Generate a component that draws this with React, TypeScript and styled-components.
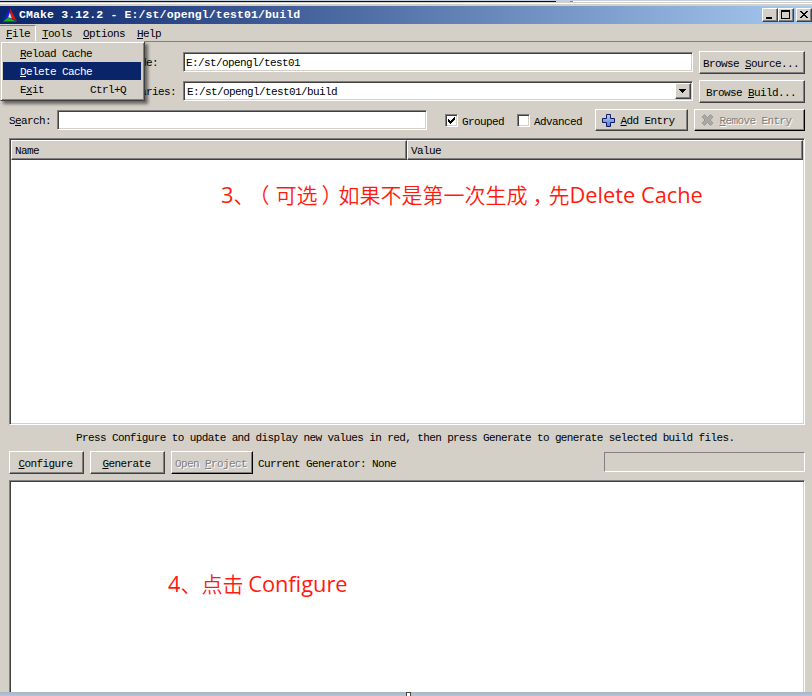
import React from "react";
import styled, { createGlobalStyle, css } from "styled-components";

const face = "#d4d0c8";
const shade = "#808080";
const dark = "#404040";
const navy = "#0a246a";

const GlobalStyle = createGlobalStyle`
  html, body { margin: 0; padding: 0; background: ${face}; overflow: hidden; }
  * { box-sizing: border-box; }
`;

const sunken = css`
  border: 1px solid;
  border-color: ${shade} #fff #fff ${shade};
  box-shadow: inset 1px 1px 0 ${dark}, inset -1px -1px 0 ${face};
`;

const raised = css`
  border: 1px solid;
  border-color: #fff ${dark} ${dark} #fff;
  box-shadow: inset -1px -1px 0 ${shade};
`;

const Window = styled.main`
  position: relative;
  width: 812px;
  height: 696px;
  display: flex;
  flex-direction: column;
  overflow: hidden;
  background: ${face};
  color: #000;
  font: 11px/12px "Liberation Mono", monospace;
  letter-spacing: -0.6px;
  white-space: pre;
`;

const TopEdge = styled.div`
  flex: none;
  height: 6px;
  background: linear-gradient(#c3d0e2 0 1px, transparent 1px 3px, #fff 3px 4px, ${face} 4px),
    linear-gradient(90deg, #111 0 556px, ${face} 556px 570px, #888 570px 573px, #fff 573px) 0 1px / 100% 1px no-repeat,
    ${face};
`;

const TitleBar = styled.header`
  flex: none;
  display: flex;
  align-items: center;
  height: 18px;
  padding: 0 0 0 3px;
  background: linear-gradient(90deg, ${navy}, #a6caf0);
  color: #fff;
`;

const Title = styled.h1`
  flex: 1;
  margin: 0 0 0 2px;
  font: bold 11.5px/12px "Liberation Mono", monospace;
  letter-spacing: 0.13px;
`;

const CaptionButton = styled.button<{ $gap?: number }>`
  ${raised}
  width: 16px;
  height: 14px;
  margin: 0 0 0 ${(p) => p.$gap ?? 0}px;
  padding: 0;
  background: ${face};
  svg { display: block; }
`;

const MenuBar = styled.nav`
  flex: none;
  display: flex;
  height: 18px;
  padding-top: 1px;
  border-bottom: 1px solid ${shade};
`;

const MenuTitle = styled.div<{ $open?: boolean; $width: number }>`
  width: ${(p) => p.$width}px;
  height: 16px;
  padding: 2px 0 0 6px;
  border: 1px solid transparent;
  border-width: 1px 1px 0 0;
  ${(p) => p.$open && css`border-color: ${shade} #fff #fff ${shade};`}
`;

const Popup = styled.div`
  position: absolute;
  left: 0;
  top: 41px;
  width: 145px;
  height: 60px;
  padding: 2px 3px 0 1px;
  background: ${face};
  border: 1px solid;
  border-color: ${face} ${dark} ${dark} ${face};
  box-shadow: inset 1px 1px 0 #fff, inset -1px -1px 0 ${shade}, 3px 3px 3px rgba(0, 0, 0, 0.5);
`;

const MenuItem = styled.div<{ $active?: boolean }>`
  display: flex;
  justify-content: space-between;
  height: 18px;
  margin-left: 1px;
  padding: 4px 15px 0 17px;
  background: ${(p) => (p.$active ? navy : "transparent")};
  color: ${(p) => (p.$active ? "#fff" : "#000")};
`;

const Mnemonic = styled.span`
  text-decoration: underline;
  text-decoration-thickness: 1px;
  text-underline-offset: 1px;
  text-decoration-skip-ink: none;
`;

const Form = styled.section`
  flex: none;
  display: grid;
  grid-template-columns: 174px 510px 106px;
  row-gap: 6px;
  padding: 9px 0 0 9px;
`;

const Label = styled.label`
  margin-left: -1px;
  padding-top: 6px;
`;

const Field = styled.div<{ $inset?: number }>`
  ${sunken}
  display: flex;
  height: 20px;
  margin-top: 1px;
  padding: 4px 1px 0 ${(p) => p.$inset ?? 2}px;
  background: #fff;
`;

const ComboArrow = styled.button`
  ${raised}
  flex: none;
  width: 16px;
  height: 16px;
  margin: -3px 0 0 auto;
  padding: 0;
  background: ${face};
  svg { display: block; }
`;

const Button = styled.button<{ $width: number; $height?: number; $disabled?: boolean; $gap?: number; $shift?: number }>`
  ${raised}
  flex: none;
  display: flex;
  align-items: center;
  justify-content: center;
  width: ${(p) => p.$width}px;
  height: ${(p) => p.$height ?? 23}px;
  margin: 0 0 0 ${(p) => p.$gap ?? 0}px;
  padding: 2px ${(p) => p.$shift ?? 2}px 0 0;
  background: ${face};
  color: ${(p) => (p.$disabled ? shade : "#000")};
  text-shadow: ${(p) => (p.$disabled ? "1px 1px 0 #fff" : "none")};
  font: inherit;
  letter-spacing: inherit;
  white-space: pre;
  svg { flex: none; margin: -3px 5px 0 0; }
  ${(p) => p.$disabled && css`border-right-color: #000; border-bottom-color: #000;`}
`;

const SearchRow = styled.section`
  flex: none;
  display: flex;
  height: 22px;
  margin: 6px 0 0 9px;
`;

const SearchLabel = styled.label`
  width: 48px;
  padding-top: 6px;
`;

const SearchField = styled(Field)`
  width: 370px;
`;

const Check = styled.span<{ $gap: number; $width: number }>`
  display: flex;
  width: ${(p) => p.$width}px;
  margin-left: ${(p) => p.$gap}px;
  padding-top: 7px;
`;

const Box = styled.span`
  ${sunken}
  flex: none;
  width: 13px;
  height: 13px;
  margin: -2px 4px 0 0;
  background: #fff;
  svg { display: block; }
`;

const Table = styled.section`
  ${sunken}
  flex: none;
  width: 796px;
  height: 287px;
  margin: 7px 0 0 9px;
  padding: 1px;
  background: #fff;
`;

const HeaderRow = styled.div`
  display: flex;
  height: 20px;
`;

const HeaderCell = styled.div<{ $width: number }>`
  ${raised}
  width: ${(p) => p.$width}px;
  padding: 4px 0 0 3px;
  background: ${face};
`;

const Note = styled.p<{ $left: number; $top: number }>`
  margin: ${(p) => p.$top}px 0 0 ${(p) => p.$left}px;
  color: #ff1a0d;
  font: 350 21px/30px "Noto Sans CJK SC", sans-serif;
  font-feature-settings: "chws" 0, "kern" 0;
  text-spacing-trim: space-all;
  letter-spacing: 0;
`;

const Latin = styled.span`
  font-family: "Open Sans", sans-serif;
  font-size: 21.8px;
  font-weight: 400;
`;

/* Centres a full-width punctuation mark in its cell. */
const Mark = styled.span<{ $shift: number }>`
  margin: 0 ${(p) => -p.$shift}px 0 ${(p) => p.$shift}px;
`;

const Hint = styled.p`
  flex: none;
  height: 12px;
  margin: 7px 0 0 76px;
  letter-spacing: -0.615px;
`;

const ActionRow = styled.section`
  flex: none;
  display: flex;
  height: 23px;
  margin: 7px 0 0 9px;
`;

const Generator = styled.span`
  width: 351px;
  padding: 7px 0 0 5px;
`;

const Progress = styled.div`
  width: 201px;
  height: 20px;
  margin-top: 1px;
  border: 1px solid;
  border-color: ${shade} #fff #fff ${shade};
`;

const Output = styled.section`
  ${sunken}
  flex: none;
  width: 796px;
  height: 212px;
  margin: 6px 0 0 9px;
  border-bottom: 0;
  background: #fff;
  box-shadow: inset 1px 1px 0 ${dark}, inset -1px 0 0 ${face};
`;

const BottomEdge = styled.footer`
  flex: none;
  display: flex;
  height: 4px;
  padding-left: 406px;
  background: linear-gradient(#a9b5c5, #b5c5d8);
`;

const Handle = styled.span`
  width: 5px;
  height: 4px;
  border: 1px solid #444;
  border-bottom: 0;
  background: #fff;
`;

const Logo = () => (
  <svg width="14" height="14" viewBox="0 0 13 14" preserveAspectRatio="none">
    <path d="M6.5 0L0 12.5L6.4 8Z" fill="#1717e8" />
    <path d="M6.5 0L13 13.5L7.2 9.8Z" fill="#e51010" />
    <path d="M0 13.5L4.6 9.6L12.6 13.5Z" fill="#18b018" />
    <path d="M6.5 4V9.5L4.7 9.6ZM6.5 5L8.2 10.6L6 9.7Z" fill="#d9dce0" />
  </svg>
);

const Plus = () => (
  <svg width="14" height="14" viewBox="0 0 14 14">
    <defs>
      <linearGradient id="plusFill" x2="0" y2="1">
        <stop stopColor="#b9cdf7" />
        <stop offset="1" stopColor="#5579d5" />
      </linearGradient>
    </defs>
    <path d="M5.5 1.5H9.5V5.5H13.5V9.5H9.5V13.5H5.5V9.5H1.5V5.5H5.5Z" fill="url(#plusFill)" stroke="#101a62" strokeLinejoin="round" />
  </svg>
);

const Cross = () => (
  <svg width="14" height="14" viewBox="0 0 14 14">
    <path d="M4.5 1.5L7.5 4.6L10.5 1.5L13 4L10.1 7L13 10L10.5 12.5L7.5 9.5L4.5 12.5L2 10L5 7L2 4Z" fill="#aaa8a4" stroke="#9d9b96" strokeLinejoin="round" />
  </svg>
);

export default function App() {
  return (
    <Window>
      <GlobalStyle />
      <TopEdge />
      <TitleBar>
        <Logo />
        <Title>CMake 3.12.2 - E:/st/opengl/test01/build</Title>
        <CaptionButton aria-label="Minimize">
          <svg width="14" height="12" viewBox="0 0 14 12"><path d="M3 8h6v2H3z" /></svg>
        </CaptionButton>
        <CaptionButton aria-label="Maximize">
          <svg width="14" height="12" viewBox="0 0 14 12" shapeRendering="crispEdges">
            <path d="M2 1h9v9H2zM3 3v6h7V3z" fillRule="evenodd" />
          </svg>
        </CaptionButton>
        <CaptionButton aria-label="Close" $gap={2}>
          <svg width="14" height="12" viewBox="0 0 14 12" shapeRendering="crispEdges">
            <path d="M3 2h2v1h1v1h2V3h1V2h2v1h-1v1H9v1H8v1h1v1h1v1h1v1H9V8H8V7H6v1H5v1H3V8h1V7h1V6h1V5H5V4H4V3H3z" />
          </svg>
        </CaptionButton>
      </TitleBar>

      <MenuBar>
        <MenuTitle $open $width={36}><Mnemonic>F</Mnemonic>ile</MenuTitle>
        <MenuTitle $width={41}><Mnemonic>T</Mnemonic>ools</MenuTitle>
        <MenuTitle $width={54}><Mnemonic>O</Mnemonic>ptions</MenuTitle>
        <MenuTitle $width={40}><Mnemonic>H</Mnemonic>elp</MenuTitle>
      </MenuBar>

      <Form>
        <Label>Where is the source code:</Label>
        <Field>E:/st/opengl/test01</Field>
        <Button $width={106} $gap={6}><span>Browse <Mnemonic>S</Mnemonic>ource...</span></Button>
        <Label>Where to build the binaries:</Label>
        <Field $inset={3}>
          E:/st/opengl/test01/build
          <ComboArrow aria-label="Open list">
            <svg width="14" height="14" viewBox="0 0 14 14" shapeRendering="crispEdges"><path d="M3 5h7v1H9v1H8v1H7v1H6V8H5V7H4V6H3z" /></svg>
          </ComboArrow>
        </Field>
        <Button $width={106} $gap={6}><span>Browse <Mnemonic>B</Mnemonic>uild...</span></Button>
      </Form>

      <SearchRow>
        <SearchLabel>S<Mnemonic>e</Mnemonic>arch:</SearchLabel>
        <SearchField />
        <Check $gap={18} $width={72}>
          <Box>
            <svg width="11" height="11" viewBox="0 0 11 11" shapeRendering="crispEdges"><path d="M2 4h1v1h1v1h1V5h1V4h1V3h1V2h1v3H8v1H7v1H6v1H5v1H4V8H3V7H2z" /></svg>
          </Box>
          Grouped
        </Check>
        <Check $gap={0} $width={78}><Box />Advanced</Check>
        <Button $width={93} $height={22} $shift={7}><Plus /><span><Mnemonic>A</Mnemonic>dd Entry</span></Button>
        <Button $width={111} $height={22} $gap={6} $shift={7} $disabled><Cross /><span><Mnemonic>R</Mnemonic>emove Entry</span></Button>
      </SearchRow>

      <Table>
        <HeaderRow>
          <HeaderCell $width={396}>Name</HeaderCell>
          <HeaderCell $width={396}>Value</HeaderCell>
        </HeaderRow>
        <Note $left={210} $top={19}>
          <Latin>3</Latin>、<Mark $shift={-6}>（</Mark>可选<Mark $shift={4}>）</Mark>如果不是第一次生成<Mark $shift={5}>，</Mark>先<Latin>Delete Cache</Latin>
        </Note>
      </Table>

      <Hint>Press Configure to update and display new values in red, then press Generate to generate selected build files.</Hint>

      <ActionRow>
        <Button $width={75}><span><Mnemonic>C</Mnemonic>onfigure</span></Button>
        <Button $width={75} $gap={6}><span><Mnemonic>G</Mnemonic>enerate</span></Button>
        <Button $width={82} $gap={6} $disabled><span>Open <Mnemonic>P</Mnemonic>roject</span></Button>
        <Generator>Current Generator: None</Generator>
        <Progress />
      </ActionRow>

      <Output>
        <Note $left={158} $top={87}>
          <Latin>4</Latin>、点击 <Latin>Configure</Latin>
        </Note>
      </Output>
      <BottomEdge><Handle /></BottomEdge>

      <Popup>
        <MenuItem><span><Mnemonic>R</Mnemonic>eload Cache</span></MenuItem>
        <MenuItem $active><span><Mnemonic>D</Mnemonic>elete Cache</span></MenuItem>
        <MenuItem><span>E<Mnemonic>x</Mnemonic>it</span><span>Ctrl+Q</span></MenuItem>
      </Popup>
    </Window>
  );
}
